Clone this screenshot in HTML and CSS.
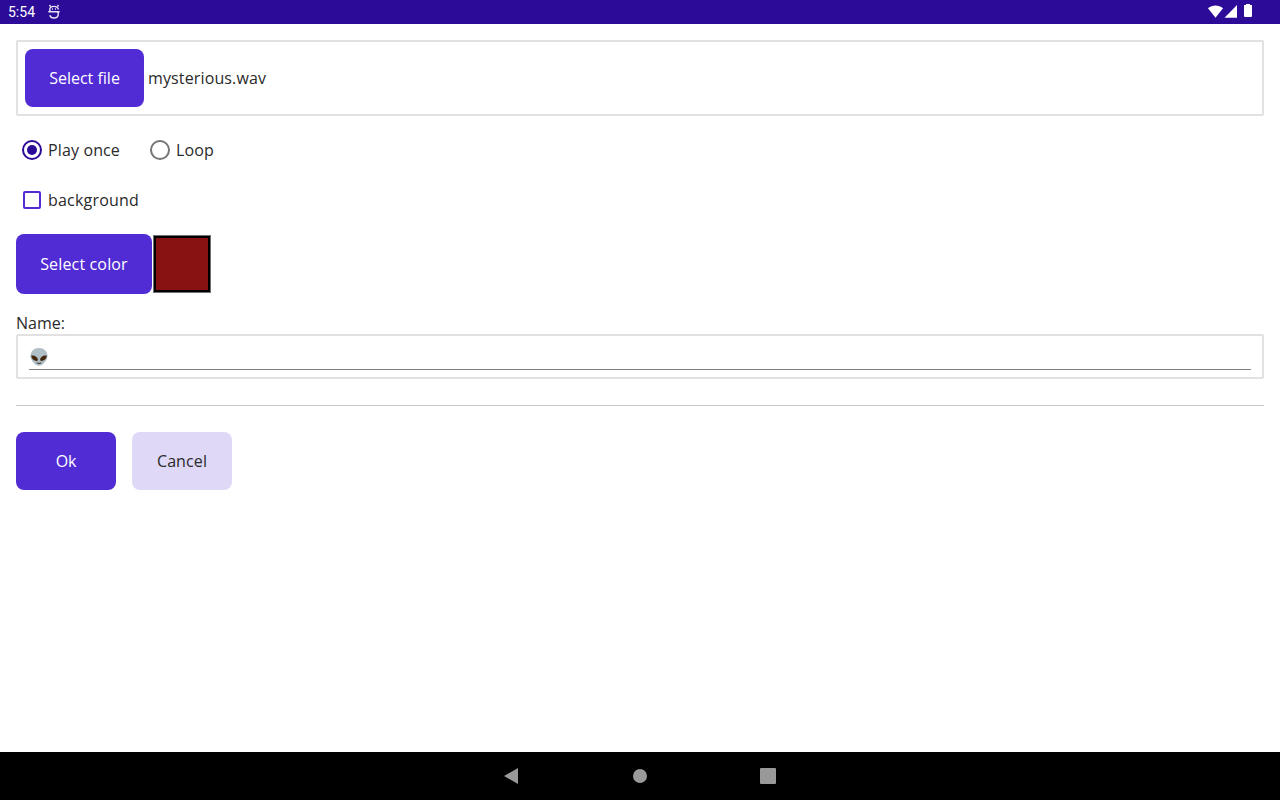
FILE: index.html
```html
<!DOCTYPE html>
<html lang="en">
<head>
<meta charset="utf-8">
<title>Sound settings</title>
<link rel="stylesheet" href="styles.css">
</head>
<body>
<div class="screen">
  <header class="status">
    <span class="clock">5:54</span>
    <svg class="notice" width="12" height="16" viewBox="0 0 12 16" fill="none" stroke="#e6e1f5" stroke-width="1.4">
      <path d="M1.500 1l1 1.500M10.500 1l-1 1.500M10.400 5.500C10 3.500 8.500 2.400 6 2.400S1.700 3.800 1.700 5.700c0 1.400.7 2 1.800 2h5c1.200 0 1.800.7 1.800 2 0 2.700-1.700 4.300-4.300 4.300-2.300 0-3.700-1-4.200-2.800M.3 7.700h3M8.500 7.700h3.200"/>
      <path d="M4 5h1M7 5h1"/>
    </svg>
    <svg class="signals" width="46" height="16" viewBox="0 0 46 16" fill="#fff">
      <path d="M0 4.300C4.500.5 10.500.5 15 4.300L7.500 13.800z"/>
      <path d="M29 1v12.800H16.500z"/>
      <path d="M36 1h2V0h4v1h2V12q0 1-1 1h-6q-1 0-1-1z"/>
    </svg>
  </header>
  <main class="form">
    <section class="file-box">
      <button class="btn file-btn">Select file</button>
      <span class="file-name">mysterious.wav</span>
    </section>
    <div class="options">
      <label class="option play"><span class="radio selected"></span>Play once</label>
      <label class="option"><span class="radio"></span>Loop</label>
    </div>
    <label class="option background"><span class="check"></span>background</label>
    <div class="color-row">
      <button class="btn color-btn">Select color</button>
      <span class="swatch"></span>
    </div>
    <div class="name-label">Name:</div>
    <div class="name-box">
      <div class="name-field">
        <svg width="18" height="18" viewBox="0 0 18 18">
          <path d="M9 0C4 0 .5 3.500.5 8c0 4.500 5 9.800 8.500 9.800s8.500-5.300 8.500-9.800C17.500 3.500 14 0 9 0z" fill="#b0bec5"/>
          <path d="M1.200 7.600c3-.8 6.400 1 6.700 4 .1 1-.5 1.600-1.700 1.400C3.400 12.600 1.300 10.500 1.200 7.600zM16.800 7.600c-3-.8-6.400 1-6.700 4-.1 1 .5 1.600 1.700 1.400 2.800-.4 4.900-2.500 5-5.400z" fill="#41250d"/>
          <path d="M6.700 14.800q2.300 1.400 4.600 0" fill="none" stroke="#3e3028" stroke-width="1"/>
        </svg>
      </div>
    </div>
    <div class="divider"></div>
    <div class="actions">
      <button class="btn ok">Ok</button>
      <button class="btn secondary">Cancel</button>
    </div>
  </main>
  <nav class="navbar">
    <svg width="16" height="18" viewBox="0 0 16 18"><path d="M15 1v16L1 9z" fill="#999"/></svg>
    <span class="home"></span>
    <span class="recent"></span>
  </nav>
</div>
</body>
</html>
```
FILE: styles.css
```css
* { box-sizing: border-box; }
body {
  margin: 0;
  background: #fff;
  color: #2a2a2a;
  font: 16px/22px "Open Sans", "Noto Sans", sans-serif;
}
.screen { display: flex; flex-direction: column; height: 800px; }
.status {
  display: flex;
  align-items: center;
  height: 24px;
  padding: 0 26px 0 8px;
  background: #2b0b98;
  color: #fff;
}
.clock { width: 40px; font: 14px/24px Roboto, sans-serif; }
.signals { margin-left: auto; margin-top: -1px; }
.form { flex: 1; display: flex; flex-direction: column; padding: 16px 16px 0; }
.btn {
  width: 100px;
  height: 58px;
  padding: 0;
  border: 0;
  border-radius: 8px;
  background: #512bd4;
  color: #fff;
  font: inherit;
}
.ok { letter-spacing: -0.3px; }
.secondary { background: #dfd8f7; color: #2a2a2a; letter-spacing: 0.1px; }
.file-box {
  display: flex;
  align-items: center;
  gap: 4px;
  height: 76px;
  padding: 0 7px;
  border: 2px solid #e1e1e1;
  border-radius: 2px;
}
.file-btn { width: 119px; }
.file-name { letter-spacing: 0.13px; }
.options { display: flex; margin-top: 18px; }
.option { display: flex; align-items: center; gap: 6px; height: 32px; padding-left: 6px; letter-spacing: 0.13px; }
.play { width: 128px; }
.radio {
  display: flex;
  align-items: center;
  justify-content: center;
  width: 20px;
  height: 20px;
  border: 2px solid #757575;
  border-radius: 50%;
}
.selected { border-color: #2b0b98; }
.selected::after { content: ""; width: 10px; height: 10px; border-radius: 50%; background: #2b0b98; }
.background { margin-top: 18px; padding-left: 7px; gap: 7px; letter-spacing: 0.2px; }
.check { width: 18px; height: 18px; border: 2px solid #512bd4; border-radius: 2px; }
.color-row { display: flex; align-items: center; gap: 1px; margin-top: 18px; }
.color-btn { width: 136px; height: 60px; letter-spacing: 0.15px; }
.swatch { width: 58px; height: 58px; background: #881212; border: 1px solid #707070; box-shadow: inset 0 0 0 2px #000; }
.name-label { height: 22px; margin-top: 18px; }
.name-box { height: 45px; padding: 0 11px; border: 2px solid #e1e1e1; border-radius: 2px; }
.name-field { display: flex; align-items: center; height: 34px; padding: 9px 0 0 1px; border-bottom: 1px solid #808080; }
.divider { height: 1px; margin-top: 26px; background: #c8c8c8; }
.actions { display: flex; gap: 16px; margin-top: 26px; }
.navbar {
  display: flex;
  align-items: center;
  justify-content: center;
  gap: 114px;
  height: 48px;
  padding-right: 2px;
  background: #000;
}
.home { width: 14px; height: 14px; border-radius: 50%; background: #999; }
.recent { width: 16px; height: 16px; margin-left: -1px; border-radius: 1px; background: #999; }
```
